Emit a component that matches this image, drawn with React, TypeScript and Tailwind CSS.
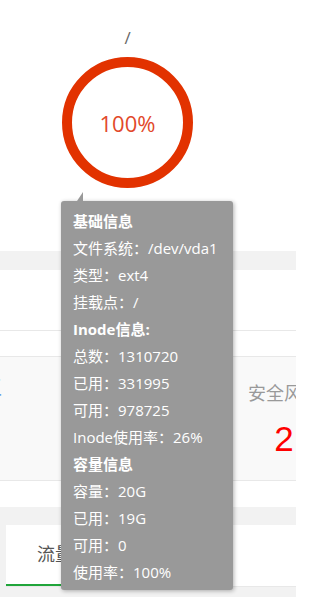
import React from 'react';

const tipRows: { text: string; bold?: boolean }[] = [
  { text: '基础信息', bold: true },
  { text: '文件系统：/dev/vda1' },
  { text: '类型：ext4' },
  { text: '挂载点：/' },
  { text: 'Inode信息:', bold: true },
  { text: '总数：1310720' },
  { text: '已用：331995' },
  { text: '可用：978725' },
  { text: 'Inode使用率：26%' },
  { text: '容量信息', bold: true },
  { text: '容量：20G' },
  { text: '已用：19G' },
  { text: '可用：0' },
  { text: '使用率：100%' },
];

const DiskTip: React.FC = () => (
  <div className="absolute left-[61px] top-[201px] w-[172px] h-[389px] rounded-[3px] bg-[#999] pt-[7px] pl-[12px] shadow-[1px_1px_4px_rgba(0,0,0,0.3)]">
    <div className="absolute left-[16px] top-[-9px] w-0 h-0 border-l-[6px] border-l-transparent border-b-[9px] border-b-[#999]" />
    {tipRows.map((row, i) => (
      <div
        key={i}
        className={`text-[15px] leading-[27px] text-white whitespace-nowrap ${row.bold ? 'font-bold' : ''}`}
      >
        {row.text}
      </div>
    ))}
  </div>
);

export default function App() {
  return (
    <div className="relative w-[296px] h-[597px] overflow-hidden bg-[#f2f2f2] font-['Open_Sans','Noto_Sans_CJK_SC',sans-serif]">
      {/* disk usage */}
      <div className="h-[251px] bg-white">
        <div className="w-[255px] flex flex-col items-center pt-[28px]">
          <div className="text-[17px] leading-[20px] text-[#666]">/</div>
          <div className="mt-[9px] w-[131px] h-[131px] rounded-full border-[10px] border-[#e23200] flex items-center justify-center">
            <span className="text-[22px] leading-[28px] text-[#e2492a]">100%</span>
          </div>
          <div className="mt-[10px] text-[14px] leading-[18px] text-[#555]">19.5G/19.6G</div>
        </div>
      </div>

      {/* overview panel */}
      <div className="mt-[19px] bg-white">
        <div className="h-[61px] border-b border-[#e8e8e8]" />
        <div className="h-[25px]" />
        <div className="h-[125px] flex overflow-hidden border-y border-[#e8e8e8] bg-[#f9f9f9]">
          <div className="w-[248px] flex-none pt-[14px]">
            <div className="-ml-[20px] text-[22px] leading-[30px] text-[#6aa0e8]">工</div>
          </div>
          <div className="w-[72px] flex-none pt-[24px] text-center whitespace-nowrap">
            <div className="text-[18px] leading-[24px] text-[#999]">安全风险</div>
            <div className="mt-[14px] font-['Liberation_Sans',sans-serif] text-[35px] leading-[40px] text-[#ff0000]">2</div>
          </div>
        </div>
        <div className="h-[26px]" />
      </div>

      {/* traffic card */}
      <div className="mt-[18px] ml-[6px] bg-white">
        <div className="flex h-[62px] border-b border-[#e8e8e8]">
          <div className="w-[110px] h-[61px] pl-[31px] flex items-center border-b-2 border-[#20a53a] text-[18px] text-[#555]">
            流量
          </div>
        </div>
      </div>

      <DiskTip />
    </div>
  );
}
